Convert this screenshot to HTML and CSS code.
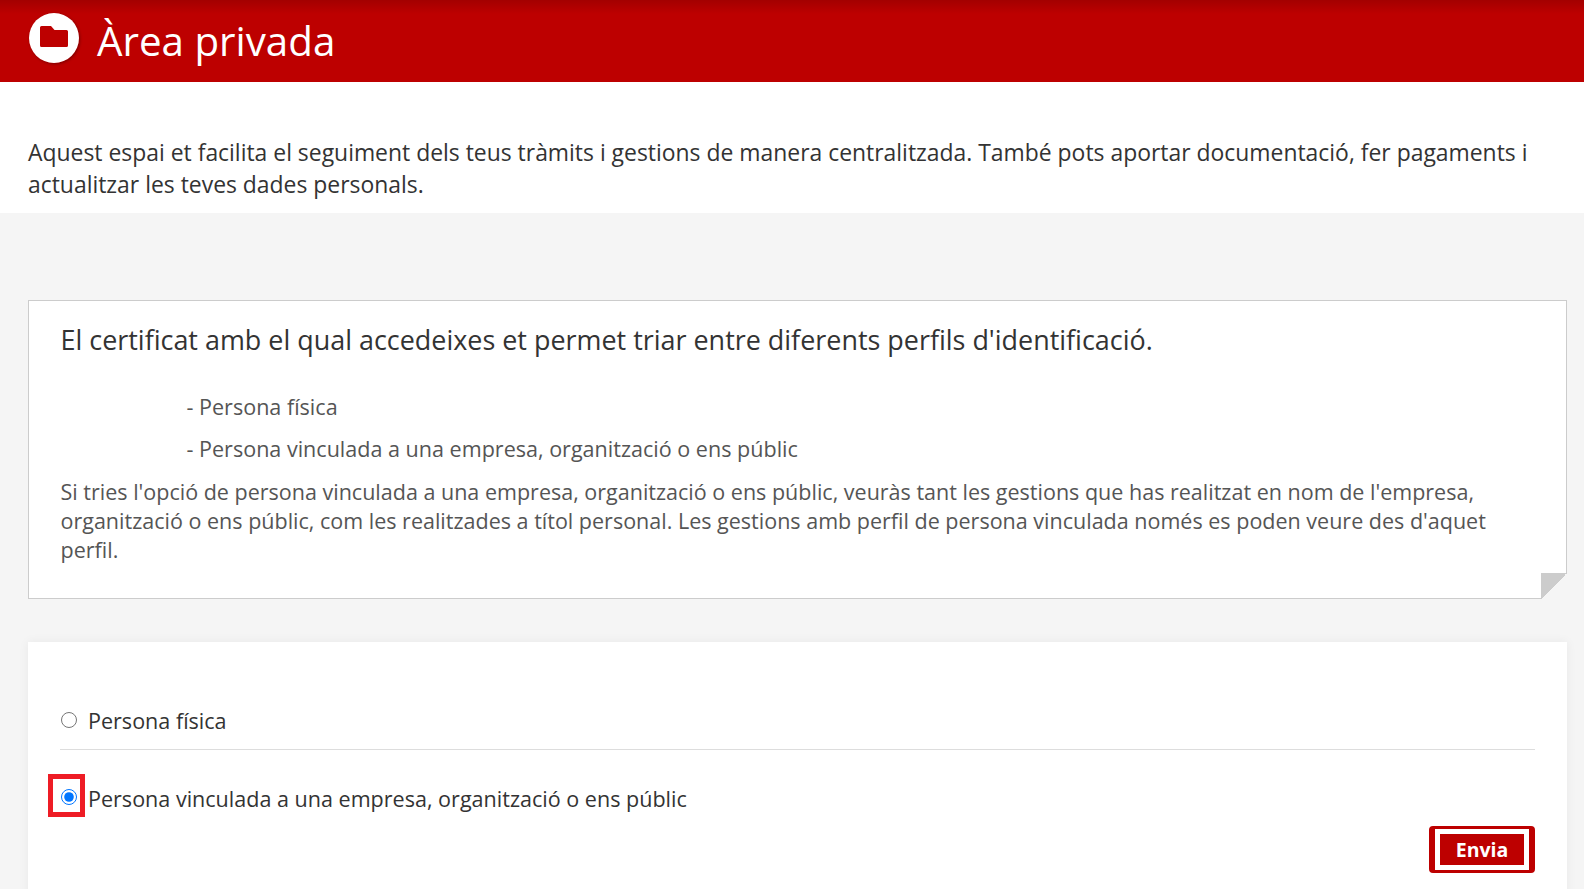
FILE: index.html
```html
<!DOCTYPE html>
<html lang="ca">
<head>
<meta charset="utf-8">
<title>Àrea privada</title>
<link rel="stylesheet" href="styles.css">
</head>
<body>
<header class="hero">
  <span class="hero-icon">
    <svg viewBox="0 0 50 50" width="50" height="50"><circle cx="25" cy="25" r="25" fill="#fff"/><path d="M11 14.500a1.500 1.500 0 0 1 1.500-1.500h9.500l3.500 4h12a1.500 1.500 0 0 1 1.500 1.500v14a1.500 1.500 0 0 1-1.500 1.500h-25a1.500 1.500 0 0 1-1.500-1.500z" fill="#bd0000"/></svg>
  </span>
  <h1>Àrea privada</h1>
</header>
<section class="intro">
  <p>Aquest espai et facilita el seguiment dels teus tràmits i gestions de manera centralitzada. També pots aportar documentació, fer pagaments i actualitzar les teves dades personals.</p>
</section>
<main class="content">
  <section class="note">
    <h2>El certificat amb el qual accedeixes et permet triar entre diferents perfils d'identificació.</h2>
    <ul>
      <li>- Persona física</li>
      <li>- Persona vinculada a una empresa, organització o ens públic</li>
    </ul>
    <p>Si tries l'opció de persona vinculada a una empresa, organització o ens públic, veuràs tant les gestions que has realitzat en nom de l'empresa, organització o ens públic, com les realitzades a títol personal. Les gestions amb perfil de persona vinculada només es poden veure des d'aquet perfil.</p>
    <span class="fold"></span>
  </section>
  <form class="card">
    <label class="opt first"><span class="radio plain"><input type="radio" name="p"></span><span class="opt-text">Persona física</span></label>
    <label class="opt second"><span class="radio focus"><input type="radio" name="p" checked></span><span class="opt-text">Persona vinculada a una empresa, organització o ens públic</span></label>
    <div class="actions"><div class="btn-ring"><button type="button">Envia</button></div></div>
  </form>
</main>
</body>
</html>
```
FILE: styles.css
```css
* { box-sizing: border-box; }
html, body { margin: 0; height: 889px; overflow: hidden; }
body { font-family: "Open Sans", sans-serif; background: #f5f5f5; color: #333; }
.hero { height: 82px; background: linear-gradient(#a30000, #bd0000 14px); display: flex; align-items: center; padding: 0 28px 6px 29px; gap: 18px; }
.hero-icon { display: flex; border-radius: 50%; box-shadow: 1px 1px 3px rgba(0,0,0,.35); }
.hero h1 { margin: 0; padding-top: 6px; font-size: 40.3px; font-weight: 400; color: #fff; line-height: 1; }
.intro { background: #fff; height: 131px; padding: 55px 28px 0; }
.intro p { margin: 0; font-size: 22.92px; line-height: 32px; color: #333; }
.content { padding: 87px 17px 0 28px; }
.note { position: relative; background: #fff; border: 1px solid #ccc; height: 299px; padding: 21px 31.500px 0; color: #555; }
.note h2 { margin: 0; font-size: 26.93px; font-weight: 400; line-height: 36px; color: #333; }
.note ul { list-style: none; margin: 34px 0 13px; padding: 0 0 0 126px; font-size: 21.56px; line-height: 30px; }
.note li { margin-bottom: 12px; }
.note li:last-child { margin-bottom: 0; }
.note p { margin: 0; font-size: 21.53px; line-height: 29px; }
.fold { position: absolute; right: -1px; bottom: -1px; width: 26px; height: 26px; background: linear-gradient(135deg, #ccc 50%, #f5f5f5 50%); }
.card { background: #fff; margin-top: 43px; height: 260px; padding: 55px 32px 0; box-shadow: 0 0 10px rgba(0,0,0,.06); }
.opt { display: flex; align-items: center; font-size: 21.55px; height: 48px; color: #333; }
.opt.first { height: 53px; padding-bottom: 4px; border-bottom: 1px solid #ddd; }
.opt.second { margin-top: 25px; }
.opt-text { margin-bottom: 2px; }
.radio { position: relative; display: flex; margin: 0 11px 0 1px; }
.radio input { width: 16px; height: 16px; margin: 0; accent-color: #0075ff; }
.plain { margin-bottom: 2px; }
.focus { margin-bottom: 4px; }
.focus::after { content: ""; position: absolute; inset: -15px -8px -12px -13px; border: 5px solid #ee1c25; pointer-events: none; }
.actions { display: flex; justify-content: flex-end; margin-top: 3px; }
.btn-ring { display: flex; border: solid #bd0000; border-width: 3px 6px; border-radius: 4px; }
button { font: 700 19.5px "Open Sans", sans-serif; color: #fff; background: #bd0000; border: 5px solid #fff; width: 94px; height: 41px; padding: 0; }
```
